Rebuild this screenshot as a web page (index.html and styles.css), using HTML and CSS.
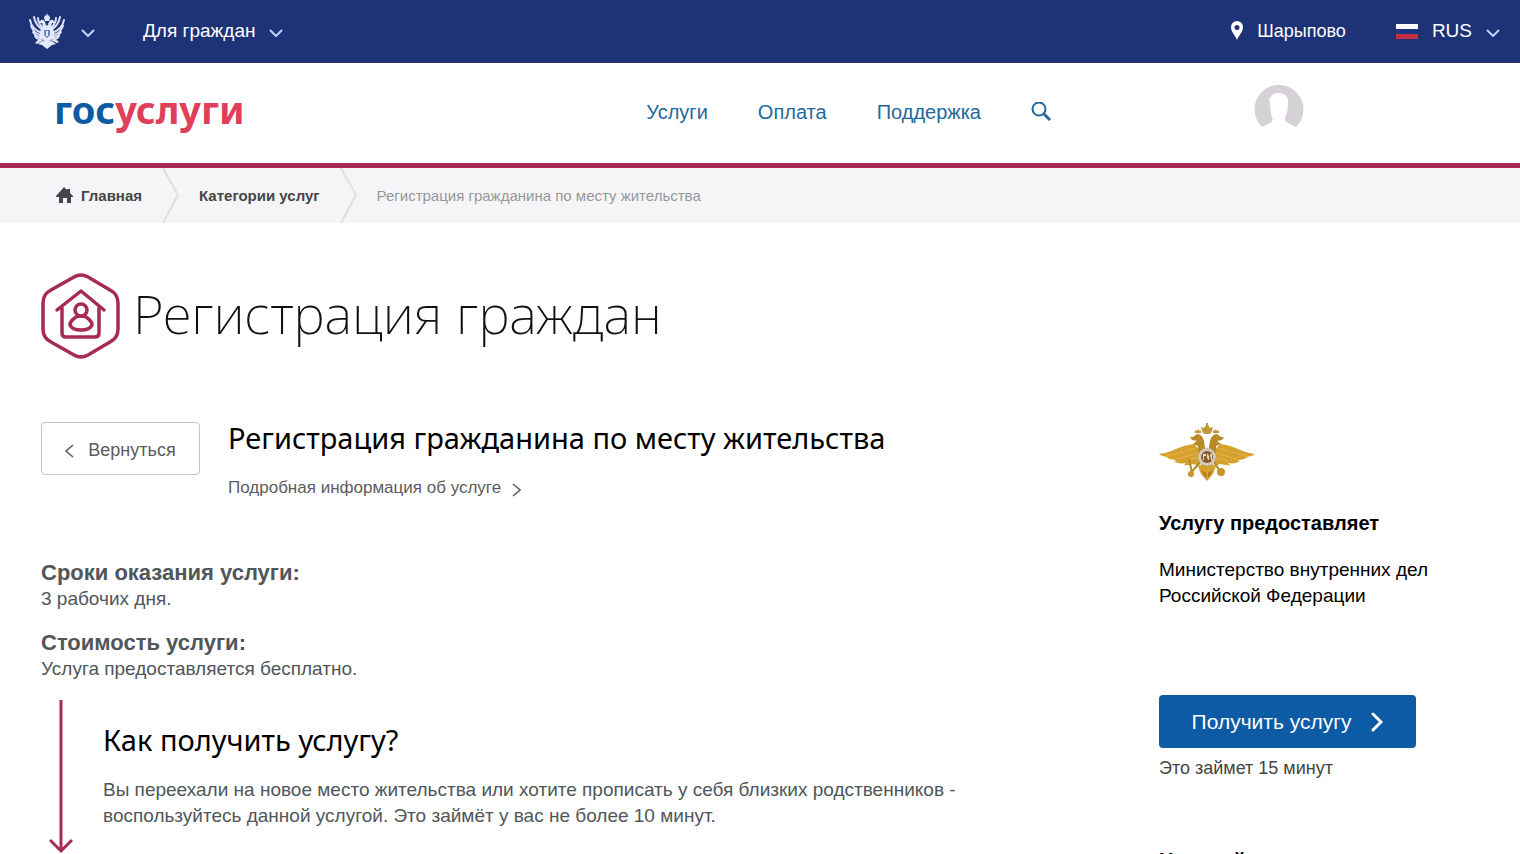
FILE: index.html
```html
<!DOCTYPE html>
<html lang="ru">
<head>
    <meta charset="UTF-8">
    <meta name="viewport" content="width=device-width, initial-scale=1.0">
    <title>Регистрация гражданина по месту жительства - Госуслуги</title>
    <link rel="stylesheet" href="styles.css">
</head>
<body>
    <div class="topbar">
        <button class="topbar-btn emblem-btn" type="button" aria-label="Порталы">
            <svg class="emblem" viewBox="0 0 36 36" aria-hidden="true">
                <g fill="none" stroke="#dbe2f8" stroke-width="2" stroke-linecap="round">
                    <path d="M13 20C7 18 2 13 1 7M13 22C8 22 4 18 2 13M14 24C9 25 6 22 4 19M14 17C9 14 6 9 5 4M14 15C11 12 9 8 9 5M13 26C10 27 8 26 6 23"/>
                    <path d="M23 20c6-2 11-7 12-13M23 22c5 0 9-4 11-9M22 24c5 1 8-2 10-5M22 17c5-3 8-8 9-13M22 15c3-3 5-7 5-10M23 26c3 1 5 0 7-3"/>
                </g>
                <g fill="#e4e9fa">
                    <path d="M17 14c0-5-2-8-5-7l-2 3 3 0c1 3 1 6 2 9zM19 14c0-5 2-8 5-7l2 3-3 0c-1 3-1 6-2 9z"/>
                    <path d="M15 5l1-3 1 1 1-3 1 3 1-1 1 3-1 3h-4z"/>
                    <path d="M12 15l6-3 6 3 2 9-4 6-4 3-4-3-4-6z"/>
                    <path d="M13 28l-4 3 4 1 5 4 5-4 4-1-4-3zM11 25l-5 5 2 1 6-4zM25 25l5 4-2 1-6-3z"/>
                </g>
                <path fill="#6f82bd" d="M15 17h6v5l-3 3-3-3zM12 26l3 1-1 2zM24 26l-3 1 1 2z"/>
                <path fill="#e4e9fa" d="M17 18h2v5h-2z"/>
            </svg>
            <svg class="chevron" viewBox="0 0 14 8" aria-hidden="true"><path d="M1 1l6 6 6-6"/></svg>
        </button>
        <button class="topbar-btn audience-btn" type="button">
            Для граждан
            <svg class="chevron" viewBox="0 0 14 8" aria-hidden="true"><path d="M1 1l6 6 6-6"/></svg>
        </button>
        <a class="location" href="#">
            <svg class="pin" viewBox="0 0 12 20" aria-hidden="true"><path fill="#fff" fill-rule="evenodd" d="M6 0a6 6 0 0 1 6 6c0 5-4 8-6 13C4 14 0 11 0 6a6 6 0 0 1 6-6zm0 4a2.500 2.500 0 1 0 0 5 2.500 2.500 0 0 0 0-5z"/></svg>
            Шарыпово
        </a>
        <button class="topbar-btn lang-btn" type="button">
            <svg class="flag" viewBox="0 0 22 15" aria-hidden="true">
                <path fill="#fff" d="M0 0h22v5H0z"/>
                <path fill="#1e3585" d="M0 5h22v5H0z"/>
                <path fill="#c22f45" d="M0 10h22v5H0z"/>
            </svg>
            RUS
            <svg class="chevron" viewBox="0 0 14 8" aria-hidden="true"><path d="M1 1l6 6 6-6"/></svg>
        </button>
    </div>

    <header class="header">
        <a class="logo" href="#"><span class="logo-blue">гос</span><span class="logo-red">услуги</span></a>
        <nav class="menu">
            <a href="#">Услуги</a>
            <a href="#">Оплата</a>
            <a href="#">Поддержка</a>
            <button class="search-btn" type="button" aria-label="Поиск">
                <svg class="search" viewBox="0 0 20 20" aria-hidden="true">
                    <circle cx="8" cy="7" r="6.500"/>
                    <path stroke-width="3" d="M13 12l6 6"/>
                </svg>
            </button>
        </nav>
        <a class="avatar" href="#" aria-label="Личный кабинет">
            <svg viewBox="0 0 50 50" aria-hidden="true">
                <path fill="#d5d1d6" d="M8 42A24.500 24.500 0 1 1 42 42L34 38Q30 36 31 32C34 27 34 21 34 15C33 10 29 8 25 8C21 8 18 9 17 12L15 13C16 16 16 25 18 32Q20 36 16 38Z"/>
            </svg>
        </a>
    </header>

    <nav class="breadcrumbs" aria-label="Навигация">
        <a class="crumb" href="#">
            <svg class="home" viewBox="0 0 17 17" aria-hidden="true"><path fill="#444649" d="M8 0l3 3V2h3v4l3 3v1h-2v6h-4v-5H7v5H3v-6H0V9z"/></svg>
            Главная
        </a>
        <svg class="crumb-arrow" viewBox="0 0 17 55" aria-hidden="true"><path d="M1 0l15 27L1 55"/></svg>
        <a class="crumb" href="#">Категории услуг</a>
        <svg class="crumb-arrow" viewBox="0 0 17 55" aria-hidden="true"><path d="M1 0l15 27L1 55"/></svg>
        <span class="crumb-current">Регистрация гражданина по месту жительства</span>
    </nav>

    <div class="page">
        <div class="page-title">
            <svg class="title-icon" viewBox="0 0 80 88" aria-hidden="true">
                <path stroke-width="3.500" d="M33 5Q40 1 47 5L69 18Q77 22 77 31V57Q77 66 69 70L47 83Q40 87 33 83L10 70Q2 66 2 57V31Q2 22 10 18Z"/>
                <path stroke-width="3.500" d="M16 38L40 19L63 38M21 36V61Q21 65 25 65H54Q58 65 58 61V36"/>
                <circle stroke-width="3.500" cx="40" cy="38" r="6"/>
                <path stroke-width="3.500" d="M35 45Q29 49 29 53Q31 58 40 58T51 53Q51 49 45 45Q40 43 35 45Z"/>
            </svg>
            <h1>Регистрация граждан</h1>
        </div>

        <div class="columns">
            <main class="content">
                <div class="service-head">
                    <button class="back-btn" type="button">
                        <svg class="arrow" viewBox="0 0 9 14" aria-hidden="true"><path d="M8 1L1 7l7 6"/></svg>
                        Вернуться
                    </button>
                    <div>
                        <h2>Регистрация гражданина по месту жительства</h2>
                        <a class="details-link" href="#">
                            Подробная информация об услуге
                            <svg class="arrow" viewBox="0 0 9 14" aria-hidden="true"><path d="M1 1l7 6-7 6"/></svg>
                        </a>
                    </div>
                </div>

                <div class="facts">
                    <h3>Сроки оказания услуги:</h3>
                    <p>3 рабочих дня.</p>
                    <h3>Стоимость услуги:</h3>
                    <p>Услуга предоставляется бесплатно.</p>
                </div>

                <section class="how">
                    <svg class="how-arrow" viewBox="0 0 24 154" aria-hidden="true"><path d="M12 0v151M1 140l11 11 11-11"/></svg>
                    <div class="how-text">
                        <h2>Как получить услугу?</h2>
                        <p>Вы переехали на новое место жительства или хотите прописать у себя близких родственников - воспользуйтесь данной услугой. Это займёт у вас не более 10 минут.</p>
                    </div>
                </section>
            </main>

            <aside class="sidebar">
                <svg class="mvd" viewBox="0 0 96 58" aria-hidden="true">
                    <path fill="#d6a02c" d="M0 31C12 30 22 22 35 21L43 30L40 43C34 39 30 43 25 42L27 40C21 41 18 40 15 38L18 37C13 37 10 36 7 34L11 34C6 34 2 33 0 31Z"/>
                    <path fill="#d6a02c" d="M96 31C84 30 74 22 61 21L53 30L56 43C62 39 66 43 71 42L69 40C75 41 78 40 81 38L78 37C83 37 86 36 89 34L85 34C90 34 94 33 96 31Z"/>
                    <path fill="none" stroke="#e3b64e" d="M8 32C20 32 27 27 36 25M17 36C26 35 32 31 39 30M27 39C31 36 35 35 40 35M88 32C76 32 69 27 60 25M79 36C70 35 64 31 57 30M69 39C65 36 61 35 56 35"/>
                    <path fill="#b98a2a" d="M46 28C46 16 43 11 38 11L34 14L31 14L33 17L38 18L34 21L39 23L39 30ZM50 28C50 16 53 11 58 11L62 14L65 14L63 17L58 18L62 21L57 23L57 30Z"/>
                    <path fill="#c39a3a" d="M43 8L42 4L45 5L47 2L47 0H49V2L51 5L54 4L53 8L51 11H45ZM36 10L36 7L38 8L39 6L41 8L42 7L42 10ZM54 10L54 7L55 8L57 6L58 8L60 7L60 10Z"/>
                    <path fill="#d6a02c" d="M39 43L48 39L57 43L54 51L48 58L42 51Z"/>
                    <path fill="none" stroke="#b98a2a" stroke-width="2" d="M41 39L31 51M30 36L33 50M55 39L61 48"/>
                    <circle fill="#c9952a" cx="32" cy="51" r="3"/>
                    <circle fill="#c9952a" cx="62" cy="49" r="4"/>
                    <circle fill="#d3cdb8" stroke="#a39c86" stroke-dasharray="1 1" cx="48" cy="34" r="9"/>
                    <circle fill="#8d5a2a" cx="48" cy="34" r="6"/>
                    <path fill="#e8dfca" d="M44 31h3v2h-2v4h-1zM48 30l2 3v4h-1l-1-3zM51 31h2v6h-1z"/>
                    <path fill="#a87820" d="M42 47l5 3v5zM54 47l-5 3v5z"/>
                </svg>
                <h4>Услугу предоставляет</h4>
                <p class="agency">Министерство внутренних дел Российской Федерации</p>
                <button class="get-btn" type="button">
                    Получить услугу
                    <svg class="get-arrow" viewBox="0 0 12 20" aria-hidden="true"><path d="M2 2l8 8-8 8"/></svg>
                </button>
                <p class="duration">Это займет 15 минут</p>
                <h4 class="next-title">На какой срок</h4>
            </aside>
        </div>
    </div>
</body>
</html>
```

FILE: styles.css
```css
* {
    margin: 0;
    padding: 0;
    box-sizing: border-box;
}

body {
    font-family: "Liberation Sans", Arial, sans-serif;
    font-size: 18px;
    line-height: 26px;
    color: #505659;
    background: #fff;
    height: 100vh;
    overflow: hidden;
}

a {
    color: inherit;
    text-decoration: none;
}

button {
    font: inherit;
    color: inherit;
    background: none;
    border: 0;
    cursor: pointer;
}

svg {
    display: block;
    flex: none;
}

.topbar {
    display: flex;
    align-items: center;
    height: 63px;
    padding: 0 20px 0 28px;
    color: #fff;
    background: #1e3278;
    border-bottom: 1px solid #2a2f62;
}

.topbar-btn,
.location {
    display: flex;
    align-items: center;
}

.emblem {
    width: 38px;
    height: 36px;
}

.emblem-btn {
    gap: 15px;
    margin-right: 48px;
}

.audience-btn {
    gap: 14px;
    font-size: 19px;
}

.chevron {
    width: 14px;
    height: 8px;
    margin-top: 4px;
    fill: none;
    stroke: #c3d1ff;
    stroke-width: 2;
}

.location {
    gap: 14px;
    margin-left: auto;
    margin-right: 50px;
}

.pin {
    width: 12px;
    height: 20px;
}

.lang-btn {
    gap: 14px;
    font-size: 19px;
}

.flag {
    width: 22px;
    height: 15px;
}

.header {
    display: flex;
    align-items: center;
    height: 105px;
    padding: 0 216px 6px 54px;
    border-bottom: 5px solid #a62a54;
}

.logo {
    font-family: "Noto Sans", "Open Sans", sans-serif;
    font-size: 38px;
    font-weight: 700;
    line-height: 48px;
    padding-bottom: 2px;
}

.logo-blue {
    color: #0d5aa5;
}

.logo-red {
    color: #df3f58;
}

.menu {
    display: flex;
    align-items: center;
    gap: 50px;
    margin-left: auto;
    margin-right: 203px;
    padding-top: 4px;
    font-size: 20px;
    color: #24699c;
}

.search {
    width: 20px;
    height: 20px;
    fill: none;
    stroke: #24699c;
    stroke-width: 2;
}

.avatar svg {
    width: 50px;
    height: 50px;
}

.breadcrumbs {
    display: flex;
    align-items: center;
    height: 55px;
    padding-left: 56px;
    font-size: 15px;
    background: #f5f5f7;
}

.crumb {
    display: flex;
    align-items: center;
    gap: 8px;
    font-weight: 700;
    color: #444649;
}

.crumb-arrow {
    width: 17px;
    height: 55px;
    margin: 0 20px;
    fill: none;
    stroke: #e0e0e3;
    stroke-width: 2;
}

.crumb-current {
    color: #96989b;
}

.home {
    width: 17px;
    height: 17px;
}

.page {
    padding: 49px 41px 0;
}

.page-title {
    display: flex;
    align-items: center;
    gap: 12px;
}

.title-icon {
    width: 80px;
    height: 88px;
    fill: none;
    stroke: #a62a54;
    stroke-linecap: round;
    stroke-linejoin: round;
}

h1 {
    font-family: "Noto Sans", "Open Sans", sans-serif;
    font-size: 53px;
    font-weight: 200;
    line-height: 64px;
    padding-bottom: 4px;
    color: #111;
}

h2 {
    font-family: "Noto Sans", "Open Sans", sans-serif;
    font-size: 29px;
    font-weight: 400;
    line-height: 32px;
    color: #000;
}

.columns {
    display: flex;
    justify-content: space-between;
    padding-top: 62px;
}

.content {
    width: 920px;
}

.service-head {
    display: flex;
    align-items: flex-start;
    gap: 28px;
}

.back-btn {
    display: flex;
    align-items: center;
    justify-content: center;
    gap: 14px;
    width: 159px;
    height: 53px;
    padding-top: 2px;
    color: #5c5c5e;
    border: 1px solid #c4c4c6;
    border-radius: 4px;
}

.arrow {
    width: 9px;
    height: 14px;
    margin-top: 3px;
    fill: none;
    stroke: #5c5c5e;
    stroke-width: 1.5;
}

.details-link {
    display: flex;
    align-items: center;
    gap: 11px;
    margin-top: 21px;
    font-size: 17px;
    color: #5c5c5e;
}

.facts {
    padding-top: 59px;
}

.facts h3 {
    font-size: 22px;
    line-height: 26px;
}

.facts p {
    margin-bottom: 18px;
    font-size: 19px;
}

.how {
    display: flex;
    gap: 30px;
    padding-left: 8px;
}

.how-arrow {
    width: 24px;
    height: 154px;
    fill: none;
    stroke: #a62a54;
    stroke-width: 3;
}

.how-text {
    padding-top: 24px;
}

.how-text p {
    margin-top: 21px;
    font-size: 19px;
}

.sidebar {
    width: 320px;
    color: #000;
}

.mvd {
    width: 96px;
    height: 58px;
    margin-top: 1px;
}

h4 {
    font-size: 20px;
    line-height: 26px;
}

.sidebar h4 {
    margin-top: 29px;
}

.agency {
    width: 280px;
    margin-top: 21px;
    font-size: 19px;
}

.get-btn {
    display: flex;
    align-items: center;
    justify-content: center;
    gap: 20px;
    width: 257px;
    height: 53px;
    margin-top: 86px;
    font-size: 21px;
    color: #fff;
    background: #0d5aa5;
    border-radius: 4px;
}

.get-arrow {
    width: 12px;
    height: 20px;
    fill: none;
    stroke: #fff;
    stroke-width: 3;
    stroke-linecap: round;
}

.duration {
    margin-top: 7px;
    color: #444;
}

.sidebar .next-title {
    margin-top: 66px;
}
```
